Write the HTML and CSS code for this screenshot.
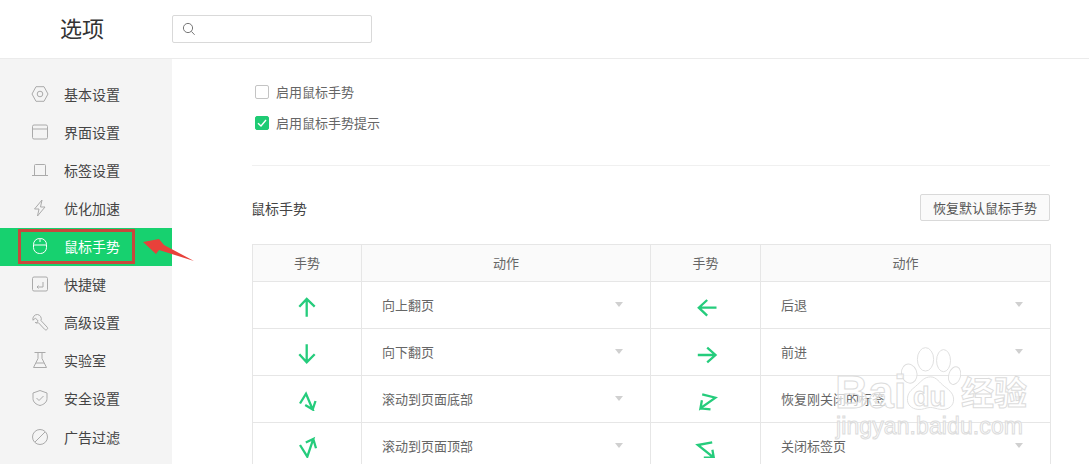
FILE: index.html
```html
<!DOCTYPE html>
<html lang="zh-CN">
<head>
<meta charset="utf-8">
<title>选项</title>
<link rel="stylesheet" href="styles.css">
</head>
<body>
<header class="topbar">
  <h1 class="title">选项</h1>
  <div class="search">
    <svg class="search-icon" viewBox="0 0 14 14"><circle cx="6" cy="6" r="4.6"/><path d="M9.4 9.4 12.6 12.8"/></svg>
  </div>
</header>
<div class="layout">
  <nav class="sidebar">
    <a class="nav-item"><svg class="nav-icon" viewBox="0 0 18 18"><path d="M5 1.700h8L17 9l-4 7.300H5L1 9z"/><circle cx="9" cy="9" r="2.800"/></svg>基本设置</a>
    <a class="nav-item"><svg class="nav-icon" viewBox="0 0 18 18"><rect x="1.500" y="2" width="15" height="14" rx="1.500"/><path d="M1.500 6h15"/></svg>界面设置</a>
    <a class="nav-item"><svg class="nav-icon" viewBox="0 0 18 18"><path d="M3.500 14V4.500a1 1 0 0 1 1-1h9a1 1 0 0 1 1 1V14M1 14.500h16"/></svg>标签设置</a>
    <a class="nav-item"><svg class="nav-icon" viewBox="0 0 18 18"><path d="M11 1 3.500 10H8l-1.500 7L14 8H9.500z"/></svg>优化加速</a>
    <a class="nav-item active"><svg class="nav-icon" viewBox="0 0 18 18"><rect x="2.500" y="1.500" width="13" height="15" rx="6"/><path d="M2.500 8h13M9 1.500V5"/></svg>鼠标手势</a>
    <a class="nav-item"><svg class="nav-icon" viewBox="0 0 18 18"><rect x="1.500" y="2" width="15" height="14" rx="1.500"/><path d="M12 7v5H6M7.500 10.500 6 12l1.500 1.500"/></svg>快捷键</a>
    <a class="nav-item"><svg class="nav-icon" viewBox="0 0 18 18"><path d="M6.500 1.500A4.500 4.500 0 0 0 2 7.200L1.900 7l2.700-1.800 2.600 2.900L5.200 10l-1-.6a4.500 4.500 0 0 0 3.300.4l6.200 6.600c.7.700 1.700.700 2.400 0s.7-1.600 0-2.300L10 7.600a4.500 4.500 0 0 0-3.500-6.100z"/></svg>高级设置</a>
    <a class="nav-item"><svg class="nav-icon" viewBox="0 0 18 18"><path d="M3.500 1.500h11M7 1.500v6L2.500 16.500h13L11 7.500v-6M5 12h8"/></svg>实验室</a>
    <a class="nav-item"><svg class="nav-icon" viewBox="0 0 18 18"><path d="M9 1.500 16 4v5.500c0 3.600-3 6-7 7-4-1-7-3.400-7-7V4z"/><path d="m5.500 9 2.500 2.500 4.500-4.500"/></svg>安全设置</a>
    <a class="nav-item"><svg class="nav-icon" viewBox="0 0 18 18"><circle cx="9" cy="9" r="7.500"/><path d="M4 14 14 4"/></svg>广告过滤</a>
  </nav>
  <main class="content">
    <label class="check-row"><span class="checkbox"></span>启用鼠标手势</label>
    <label class="check-row"><span class="checkbox checked"><svg viewBox="0 0 14 14"><path d="M3 7.200 6 10l5-6"/></svg></span>启用鼠标手势提示</label>
    <hr class="divider">
    <div class="section-head">
      <span class="section-title">鼠标手势</span>
      <button class="reset">恢复默认鼠标手势</button>
    </div>
    <table class="gestures">
      <colgroup><col class="col-g1"><col class="col-a1"><col class="col-g2"><col class="col-a2"></colgroup>
      <thead><tr><th>手势</th><th>动作</th><th>手势</th><th>动作</th></tr></thead>
      <tbody>
        <tr>
          <td class="g"><svg viewBox="0 0 24 24"><path d="M11.700 6v17.700M4.300 13.700l7.400-7.700 8 7.700"/></svg></td>
          <td><div class="select">向上翻页<i class="caret"></i></div></td>
          <td class="g"><svg viewBox="0 0 24 24"><path d="M22.500 14.700H4.800M13.200 7l-8.400 7.700 8.400 8"/></svg></td>
          <td><div class="select">后退<i class="caret"></i></div></td>
        </tr>
        <tr>
          <td class="g"><svg viewBox="0 0 24 24"><path d="M11.700 4.300v18M4.300 14.300l7.400 8 8-8"/></svg></td>
          <td><div class="select">向下翻页<i class="caret"></i></div></td>
          <td class="g"><svg viewBox="0 0 24 24"><path d="M3.800 15h17.700M13.200 7.700l8.300 7.300-8.300 7.300"/></svg></td>
          <td><div class="select">前进<i class="caret"></i></div></td>
        </tr>
        <tr>
          <td class="g"><svg viewBox="0 0 24 24"><path d="M5 16.500 11 6.700l6.700 15.800-7.500-4.500M17.700 22.500 20.500 14"/></svg></td>
          <td><div class="select">滚动到页面底部<i class="caret"></i></div></td>
          <td class="g"><svg viewBox="0 0 24 24"><path d="M8.200 7.300 21.500 10.700 6.500 21.300l1.400-8M6.500 21.300l10 1"/></svg></td>
          <td><div class="select">恢复刚关闭的标签<i class="caret"></i></div></td>
        </tr>
        <tr>
          <td class="g"><svg viewBox="0 0 24 24"><path d="M5 11l7.300 11.700L18.300 5l-7.500 3.500M18.300 5 21 14.300"/></svg></td>
          <td><div class="select">滚动到页面顶部<i class="caret"></i></div></td>
          <td class="g"><svg viewBox="0 0 24 24"><path d="M18.200 8.300 3.800 11l16 12.700-1.400-8M19.800 23.700h-10"/></svg></td>
          <td><div class="select">关闭标签页<i class="caret"></i></div></td>
        </tr>
      </tbody>
    </table>
  </main>
</div>

<div class="annotation-box"></div>
<svg class="annotation-arrow" viewBox="0 0 52 24"><path d="M0 4 16 1l5 6 30 16-35-11-3 4z"/></svg>

<div class="watermark">
  <svg class="paw" viewBox="0 0 110 100" preserveAspectRatio="none">
    <ellipse cx="49" cy="19" rx="14" ry="18"/>
    <ellipse cx="80" cy="21" rx="12" ry="17"/>
    <ellipse cx="21" cy="41" rx="13" ry="15" transform="rotate(-25 21 41)"/>
    <ellipse cx="99" cy="44" rx="10" ry="14" transform="rotate(20 99 44)"/>
    <path d="M58 46c10 0 15 9 24 15 9 6 17 12 15 23-2 9-12 13-22 12-8-1-12-3-18-3-7 0-12 4-21 3-11-1-19-7-18-17 1-11 9-14 17-21 8-6 12-12 23-12z"/>
  </svg>
  <span class="wm-bai">Bai</span>
  <span class="wm-du">du</span>
  <span class="wm-cn">经验</span>
  <span class="wm-url">jingyan.baidu.com</span>
</div>
</body>
</html>
```

FILE: styles.css
```css
* { box-sizing: border-box; }
html, body { margin: 0; height: 100%; overflow: hidden; background: #fff; }
body {
  font-family: "Noto Sans CJK SC", "Liberation Sans", sans-serif;
  font-size: 13px;
  color: #555;
  position: relative;
}

.topbar {
  height: 59px;
  display: flex;
  align-items: center;
  border-bottom: 1px solid #ebebeb;
}
.title {
  margin: 0 0 4px 60px;
  width: 112px;
  font-size: 22px;
  font-weight: 400;
  color: #333;
  line-height: 28px;
}
.search {
  width: 200px;
  height: 28px;
  margin-bottom: 1px;
  border: 1px solid #d9d9d9;
  border-radius: 2px;
  display: flex;
  align-items: center;
  padding-left: 9px;
}
.search-icon { width: 14px; height: 14px; fill: none; stroke: #777; stroke-width: 1; }

.layout { display: flex; height: 405px; }
.sidebar {
  width: 172px;
  flex: none;
  background: #f4f4f4;
  padding-top: 17px;
}
.nav-item {
  height: 38px;
  display: flex;
  align-items: center;
  gap: 15px;
  padding: 0 0 2px 31px;
  font-size: 14px;
  color: #444;
  line-height: 36px;
}
.nav-item:last-child { margin-top: 1px; }
.nav-item.active { background: #17d16f; color: #fff; }
.nav-icon { width: 18px; height: 18px; flex: none; fill: none; stroke: #aaa; stroke-width: 1; }
.active .nav-icon { stroke: #fff; }

.content { flex: 1; padding: 17px 39px 0 80px; min-width: 0; }
.check-row {
  height: 31px;
  display: flex;
  align-items: center;
  gap: 7px;
  padding-left: 3px;
  color: #666;
}
.checkbox {
  width: 14px;
  height: 14px;
  border: 1px solid #c4c4c4;
  border-radius: 2px;
  background: #fff;
  flex: none;
}
.checkbox svg { display: block; width: 14px; height: 14px; margin: -1px; fill: none; stroke: #fff; stroke-width: 1.400; }
.checkbox.checked { background: #1fcb74; border-color: #1fcb74; }
.divider { border: 0; border-top: 1px solid #f0f0f0; margin: 27px 0 28px; }

.section-head { display: flex; justify-content: space-between; align-items: center; height: 27px; }
.section-title { font-size: 14px; color: #444; margin-left: -1px; }
.reset {
  width: 130px;
  height: 27px;
  padding: 0;
  border: 1px solid #d9d9d9;
  border-radius: 2px;
  background: #fafafa;
  font: inherit;
  color: #555;
}

.gestures {
  width: 798px;
  margin-top: 23px;
  border-collapse: collapse;
  table-layout: fixed;
}
.col-g1 { width: 109px; }
.col-a1 { width: 289px; }
.col-g2 { width: 110px; }
.col-a2 { width: 290px; }
.gestures th, .gestures td { border: 1px solid #e6e6e6; padding: 0; }
.gestures th { height: 37px; padding-bottom: 2px; background: #fafafa; font-weight: 400; color: #666; text-align: center; }
.gestures td { height: 47px; }
.g { text-align: center; }
.g svg { display: block; width: 24px; height: 24px; margin: auto; fill: none; stroke: #25cc7c; stroke-width: 2.300; }
.select {
  display: flex;
  justify-content: space-between;
  align-items: center;
  padding: 0 27px 2px 20px;
  color: #666;
}
.caret {
  width: 0;
  height: 0;
  border-left: 4px solid transparent;
  border-right: 4px solid transparent;
  border-top: 5px solid #d0d0d0;
}

.annotation-box {
  position: absolute;
  left: 18px;
  top: 229px;
  width: 117px;
  height: 35px;
  border: 3px solid #c8483c;
}
.annotation-arrow {
  position: absolute;
  left: 143px;
  top: 238px;
  width: 52px;
  height: 24px;
  fill: #e8413a;
}

.watermark { position: absolute; left: 830px; top: 340px; width: 205px; height: 105px; }
.paw {
  position: absolute;
  left: 67px;
  top: 7px;
  width: 64px;
  height: 65px;
  fill: rgba(255, 255, 255, .7);
  stroke: #ddd;
  stroke-width: 1.500;
}
.wm-bai, .wm-du, .wm-cn, .wm-url {
  position: absolute;
  font-family: "Liberation Sans", sans-serif;
  font-weight: 700;
  color: rgba(255, 255, 255, .7);
  -webkit-text-stroke: 1px #dcdcdc;
  line-height: 1;
  white-space: nowrap;
}
.wm-bai { left: 5px; top: 29px; font-size: 46px; }
.wm-du { left: 83px; top: 44px; font-size: 27px; }
.wm-cn { left: 131px; top: 35px; font-size: 33px; font-family: "Noto Sans CJK SC", sans-serif; }
.wm-url { left: 6px; top: 75px; font-size: 23px; font-weight: 400; letter-spacing: .1px; }
```
